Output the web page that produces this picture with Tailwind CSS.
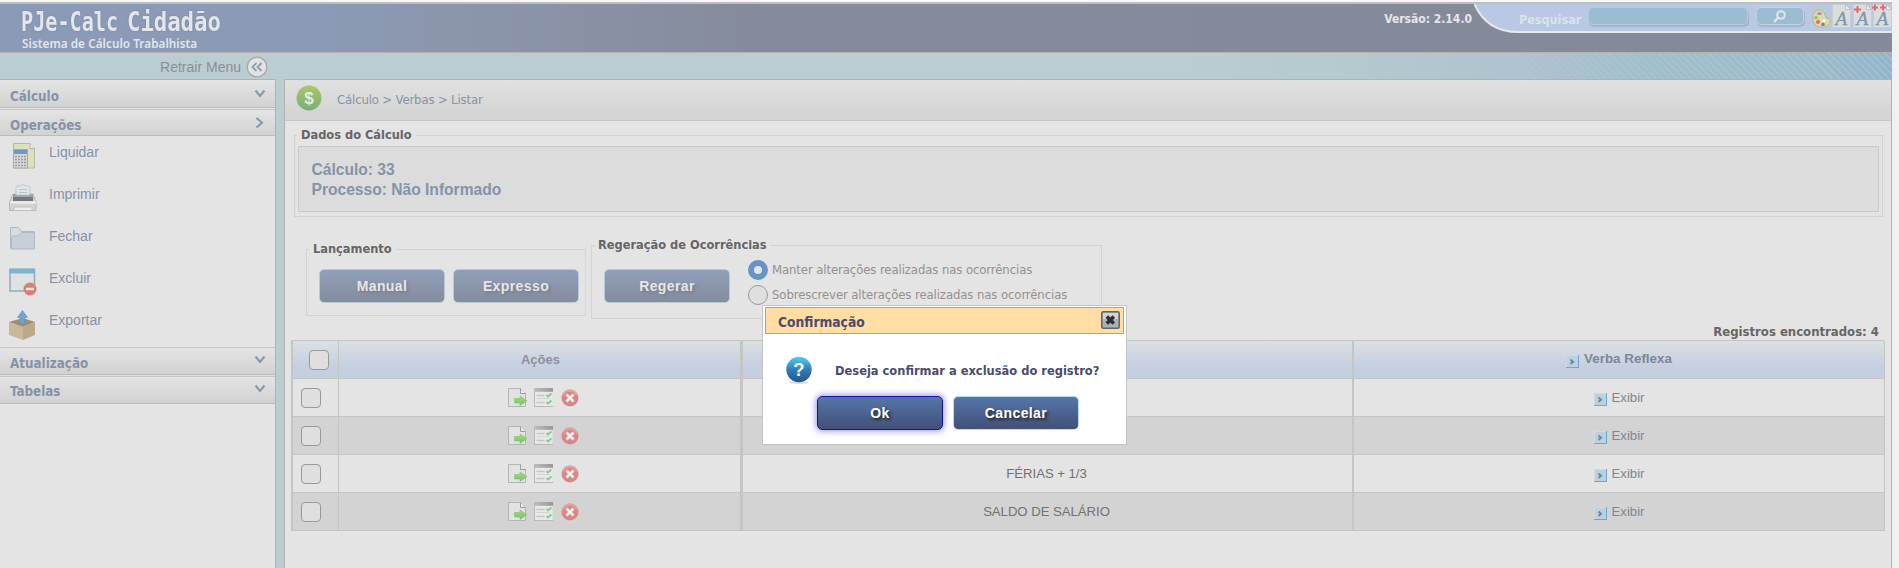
<!DOCTYPE html>
<html lang="pt-BR">
<head>
<meta charset="utf-8">
<title>PJe-Calc Cidadão</title>
<script src="https://cdn.jsdelivr.net/npm/@tailwindcss/browser@4"></script>
</head>
<body class="relative h-[568px] w-[1899px] overflow-hidden bg-[#f0f0f0] font-['Liberation_Sans',Arial,sans-serif]">

<svg class="absolute size-0">
  <defs>
    <linearGradient id="gGreen" x1="0" y1="0" x2="0" y2="1"><stop offset="0" stop-color="#a9ca69"/><stop offset="1" stop-color="#7bab78"/></linearGradient>
    <linearGradient id="gBlue" x1="0" y1="0" x2="0" y2="1"><stop offset="0" stop-color="#55cdf0"/><stop offset=".5" stop-color="#2f7fb8"/><stop offset="1" stop-color="#245689"/></linearGradient>
    <linearGradient id="gGray" x1="0" y1="0" x2="1" y2="0"><stop offset="0" stop-color="#bdbdbd"/><stop offset="1" stop-color="#989898"/></linearGradient>
    <linearGradient id="gArrow" x1="0" y1="0" x2="0" y2="1"><stop offset="0" stop-color="#b5d866"/><stop offset="1" stop-color="#6fc07c"/></linearGradient>
  </defs>
  <symbol id="down" viewBox="0 0 12 10"><path d="M1.500 1.500 6 7l4.500-5.500" fill="none" stroke="#8897ab" stroke-width="2"/></symbol>
  <symbol id="docgo" viewBox="0 0 19 19"><path d="M.5.5h12l5 5v13H.5z" fill="#e2e2e2" stroke="#b4b4b4"/><path d="M12.500.5v5h5" fill="#ececec" stroke="#9b9b9b"/><path d="M6.500 10.500h5.500v-2.500l7 4.700-7 4.800v-2.500H6.500z" fill="url(#gArrow)" stroke="#7cc275" stroke-width=".6"/></symbol>
  <symbol id="list" viewBox="0 0 19 19"><path d="M.5.5h18v18H.5z" fill="#e8e8e8"/><path d="M.5 0v19M0 18.500h19" stroke="#b8b8b8"/><path d="M0 0h19v3.800H0z" fill="url(#gGray)"/><path d="M2.500 7.500h8M2.500 14.500h8" stroke="#c6c6c6" stroke-width="1.500"/><path d="M2.500 10.500h13" stroke="#d4d4d4"/><path d="m12.500 7 1.500 1.500 3.500-3M12.500 14l1.500 1.500 3.500-3" fill="none" stroke="#86cd93" stroke-width="2"/></symbol>
  <symbol id="del" viewBox="0 0 18 18"><circle cx="9" cy="9" r="8.500" fill="#d98786"/><path d="M2 6.500a7.500 7.500 0 0 1 14 0" fill="none" stroke="#e3a2a0" stroke-width="2"/><path d="m5.500 5.500 7 7m0-7-7 7" stroke="#ececec" stroke-width="2.800"/></symbol>
  <symbol id="exp" viewBox="0 0 13 13"><path d="M0 0h13v13H0z" fill="#bcd0de"/><path d="M0 0h12v1H1v11H0z" fill="#cfdbe3"/><path d="M12 0h1v13H0v-1h12z" fill="#62abd3"/><path d="m4.500 4.500 2.500 2.200-2.500 2.300" fill="none" stroke="#688ba2" stroke-width="2"/></symbol>
  <symbol id="sheet" viewBox="0 0 19 24"><path d="M.5.500h13l5 5v18H.5z" fill="#dcdcdc" stroke="#c9cdd3"/><path d="M13.500.5v5h5z" fill="#eee" stroke="#c0c4ca"/></symbol>
</svg>

<div class="flex h-full w-[1892px] flex-col">
  <div class="h-[2px] shrink-0 bg-[#f8f8f8]"></div>
  <!-- Top banner -->
  <header class="flex h-[51px] shrink-0 justify-between border-y border-y-[#b7b2ae] border-t-[#bebebe] border-t-2 bg-[linear-gradient(90deg,#8b9bb7_0px,#8b9bb7_300px,#8b95aa_480px,#858b9c_760px,#858a9a_100%)]">
    <div class="pt-[2px] pl-[21px]">
      <div class="flex h-[31px] text-[26.5px] leading-[31px] font-bold text-[#e4e6ea] font-['DejaVu_Sans_Mono',monospace] [text-shadow:0_0_2px_#707f9b]">
        <span class="w-[106px] whitespace-nowrap"><span class="inline-block origin-left scale-x-[0.76]">PJe-Calc</span></span>
        <span class="w-[106px] whitespace-nowrap"><span class="inline-block origin-left scale-x-[0.84]">Cidadão</span></span>
      </div>
      <p class="pl-px text-[11.7px] leading-[12px] font-semibold text-[#e2e5ea] tracking-[0.07px] font-['Noto_Sans',sans-serif]">Sistema de Cálculo Trabalhista</p>
    </div>
    <div class="flex">
      <span class="mt-[7px] mr-[2px] text-[12px] leading-[16px] font-bold text-[#e6e6e6] font-['DejaVu_Sans_Condensed','DejaVu_Sans',sans-serif]">Versão: 2.14.0</span>
      <div class="relative flex h-[29px] w-[418px]">
        <svg class="absolute inset-0" width="418" height="29"><path d="M0-1C6 13 17 28 44 28H418V-1z" fill="#b9c9e3"/><path d="M0-1C6 13 17 28 44 28H418" fill="none" stroke="#e6e8ec" stroke-width="2"/></svg>
        <div class="relative flex w-full items-start">
          <span class="mt-[8px] ml-[45px] w-[69px] text-[12.5px] leading-[16px] font-bold text-[#dde2ea] font-['DejaVu_Sans_Condensed','DejaVu_Sans',sans-serif]">Pesquisar</span>
          <div class="mt-[3px] h-[18px] w-[160px] rounded-[5px] border border-[#b2cbdb] bg-[#9bbdd2] shadow-[1px_2px_1px_#a5b3cc]"></div>
          <div class="mt-[3px] ml-[8px] flex h-[18px] w-[48px] justify-center rounded-[5px] border border-[#c4d3e3] bg-[#9bbdd2] shadow-[1px_2px_1px_#a5b3cc]">
            <svg width="16" height="16"><circle cx="9" cy="7" r="3.800" fill="none" stroke="#dfe5ea" stroke-width="2"/><path d="M6.200 9.500 2 14" stroke="#dfe5ea" stroke-width="2.300"/></svg>
          </div>
          <svg class="mt-[5px] ml-[8px]" width="19" height="19"><path d="M7 .8C2 1-.5 7 1.300 12.500 3.500 18 8 18.500 11.500 18.200c3 0 6.500-3 6.800-6 0-2.500-2-3.500-4-3C13 6 12.500 1 7 .8z" fill="#ddd9a8" stroke="#b9b37c"/><ellipse cx="7.500" cy="4.500" rx="2.300" ry="1.600" fill="#b484c4"/><circle cx="4" cy="8.500" r="1.800" fill="#8ac27b"/><circle cx="6" cy="13" r="2" fill="#e06a6a"/><circle cx="11" cy="15.500" r="1.800" fill="#5f85c8"/><circle cx="12" cy="11.500" r="1.500" fill="#fff"/></svg>
          <svg class="ml-px" width="19" height="24"><use href="#sheet"/><text x="3.500" y="21" font-family="Liberation Serif" font-style="italic" font-size="19" stroke="#7a97b2" stroke-width=".3" fill="#7a97b2">A</text></svg>
          <svg class="ml-px" width="20" height="24"><use href="#sheet" width="19" height="24" x="1"/><text x="4.500" y="21" font-family="Liberation Serif" font-style="italic" font-size="19" stroke="#7a97b2" stroke-width=".3" fill="#7a97b2">A</text><path d="M2 5.500h7M5.500 2v7" stroke="#e46b6b" stroke-width="2"/></svg>
          <svg width="20" height="24"><use href="#sheet" width="19" height="24" x="1"/><text x="4.500" y="21" font-family="Liberation Serif" font-style="italic" font-size="19" stroke="#7a97b2" stroke-width=".3" fill="#7a97b2">A</text><path d="M0 3.500h6M3 .5v6M8 3.500h6M11 .5v6" stroke="#e46b6b" stroke-width="2"/></svg>
        </div>
      </div>
    </div>
  </header>

  <!-- Menu toggle strip -->
  <div class="relative h-[26px] shrink-0 bg-[linear-gradient(90deg,#bbcdd1_0px,#bbcdd1_1180px,#b4cace_1340px,#adc1cf_1540px,#a0bfca_1650px,#9dbccb_1800px,#93b5ca_1892px)]">
    <div class="absolute inset-y-0 right-0 w-[560px] bg-[repeating-linear-gradient(45deg,transparent_0px,transparent_3.500px,rgba(220,235,240,0.2)_3.500px,rgba(220,235,240,0.2)_5px)] [mask-image:linear-gradient(90deg,transparent,#000)]"></div>
    <div class="flex h-full w-[268px] items-center justify-end gap-[5px] pt-px">
      <span class="text-[14px] leading-none text-[#8d8f91]">Retrair Menu</span>
      <svg width="22" height="22" viewBox="0 0 22 22"><circle cx="11" cy="11" r="9.800" fill="#e3e3e3" stroke="#a3a8ab" stroke-width="1.300"/><path d="m10.500 7-4 4 4 4m5-8-4 4 4 4" fill="none" stroke="#8d9db0" stroke-width="1.800"/></svg>
    </div>
  </div>

  <div class="flex min-h-0 flex-1 gap-[8px] bg-[#bbcdd1]">
    <!-- Side menu -->
    <nav class="flex w-[276px] shrink-0 flex-col border-t border-r border-[#b2b2b2] bg-[#e4e4e4] text-[13.3px] font-bold text-[#8593a8] font-['DejaVu_Sans_Condensed','DejaVu_Sans',sans-serif]">
      <div class="flex h-[28px] items-center justify-between border-b border-[#bcbcbc] bg-linear-to-b from-[#e4e4e4] to-[#d2d2d2] pt-[6px] pr-[9px] pl-[10px]"><span>Cálculo</span><svg class="mb-[6px]" width="12" height="10"><use href="#down"/></svg></div>
      <div class="mt-px flex h-[27px] items-center justify-between border-y border-[#bcbcbc] border-t-[#c6c6c6] bg-linear-to-b from-[#e4e4e4] to-[#d2d2d2] pt-[6px] pr-[11px] pl-[10px]"><span>Operações</span><svg class="mb-[6px]" width="9" height="12"><path d="M1.500 1 7 5.800 1.500 10.500" fill="none" stroke="#8897ab" stroke-width="2"/></svg></div>
      <ul class="h-[211px] pt-[4px] pl-[9px] text-[14px] font-normal font-['Liberation_Sans',Arial,sans-serif]">
        <li class="flex h-[42px] gap-[12px]"><svg class="mt-[2px]" width="28" height="30"><path d="M4.500 1.500H21l4.500 5v19.500h-21z" fill="#dedfbc" stroke="#b8b8a6"/><path d="M21 1.500v5h4.500" fill="#eee" stroke="#b0b0b0"/><path d="M4.500 7.500h14v18.500h-14z" fill="#d8d8d8" stroke="#a8a8a8"/><path d="M5 8h13v4H5z" fill="#6d97c4"/><path d="M6 14.500h11M6 17.500h11M6 20.500h11M6 23.500h11" stroke="#9d9d9d" stroke-width="1.500" stroke-dasharray="2 1"/></svg><span class="pt-[2px] leading-[21px]">Liquidar</span></li>
        <li class="flex h-[42px] gap-[12px]"><svg class="mt-[2px]" width="28" height="30"><path d="M4 10h20l3 8v8.500H0.500V18z" fill="#d4d4d4" stroke="#adadad" stroke-width=".8"/><path d="M4 10h20v7H4z" fill="#777"/><path d="M4 10h20v3H4z" fill="#a2a2a2"/><path d="M7 2.500 14 .8l7 1.700v8.500H7z" fill="#dfe5e8" stroke="#b9c2c6" stroke-width=".8"/><path d="M10 5.500h8M10 8.500h8" stroke="#bcc4c8"/><path d="M1 18.500h26" stroke="#f0f0f0" stroke-width="2"/><path d="M5 23h18v3.500H5z" fill="#eee" stroke="#c0c0c0"/></svg><span class="pt-[2px] leading-[21px]">Imprimir</span></li>
        <li class="flex h-[42px] gap-[12px]"><svg class="mt-[2px]" width="28" height="30"><path d="M1.500 22.500v-21h8l3 4h12.500v17z" fill="#d9dcdf" stroke="#b3b8bf"/><path d="M2.500 23V12q0-2 2-2h5l3-3.500h13V23z" fill="#c8cfd9" stroke="#b0b8c4"/></svg><span class="pt-[2px] leading-[21px]">Fechar</span></li>
        <li class="flex h-[42px] gap-[12px]"><svg class="mt-[2px]" width="28" height="30"><path d="M1 1.500h24.500V23H1z" fill="#dfe2e3" stroke="#8fadbb" stroke-width="1.500"/><path d="M.5.5h25.500v5H.5z" fill="#7eb2cf"/><circle cx="21" cy="21" r="6.500" fill="#d97f76"/><path d="M17 21h8" stroke="#f0e6e4" stroke-width="2.500"/></svg><span class="pt-[2px] leading-[21px]">Excluir</span></li>
        <li class="flex h-[42px] gap-[12px]"><svg class="mt-[2px]" width="28" height="32"><path d="M0 12 14 8l12 4-12 5z" fill="#a08d70"/><path d="M0 12l14 5v13L0 25z" fill="#c9b79a"/><path d="M26 12l-12 5v13l12-5z" fill="#bda98a"/><path d="M13.500.5 18.500 7.500h-3V14h-4.500V7.500H8.500z" fill="#76a1d3" stroke="#5f8cc2" stroke-width=".6"/></svg><span class="pt-[2px] leading-[21px]">Exportar</span></li>
      </ul>
      <div class="flex h-[28px] items-center justify-between border-y border-[#bcbcbc] border-t-[#c6c6c6] bg-linear-to-b from-[#e4e4e4] to-[#d2d2d2] pt-[6px] pr-[9px] pl-[10px]"><span>Atualização</span><svg class="mb-[8px]" width="12" height="10"><use href="#down"/></svg></div>
      <div class="mt-[1px] flex h-[28px] items-center justify-between border-y border-[#bcbcbc] border-t-[#c6c6c6] bg-linear-to-b from-[#e4e4e4] to-[#d2d2d2] pt-[4px] pr-[9px] pl-[10px]"><span>Tabelas</span><svg class="mb-[7px]" width="12" height="10"><use href="#down"/></svg></div>
    </nav>

    <!-- Content -->
    <main class="flex min-w-0 flex-1 flex-col border border-b-0 border-[#b2b2b2] bg-[#e4e4e4]">
      <div class="flex h-[41px] shrink-0 items-center border-b border-[#c6c6c6] bg-[linear-gradient(180deg,#e1e1e1,#d5d5d5_80%)] pl-[11px] text-[#8593a8] font-['DejaVu_Sans_Condensed','DejaVu_Sans',sans-serif]">
        <svg class="-mt-[4px]" width="26" height="26"><circle cx="13" cy="13" r="12.500" fill="url(#gGreen)"/><text x="13" y="19" text-anchor="middle" font-family="Liberation Sans" font-weight="700" font-size="17" fill="#e6eadf">$</text></svg>
        <span class="-mt-[1px] ml-[15px] text-[13px] tracking-[-0.15px] whitespace-pre">Cálculo &gt; Verbas &gt; Listar</span>
      </div>

      <fieldset class="mt-[5px] mr-[8px] ml-[9px] h-[91px] border border-[#d3d3d3] px-[3px] text-[#666]">
        <legend class="ml-[-1px] px-[4px] text-[12.7px] leading-[18px] font-bold font-['DejaVu_Sans_Condensed','DejaVu_Sans',sans-serif]">Dados do Cálculo</legend>
        <div class="mt-[2px] flex h-[66px] flex-col justify-center border border-[#c9c9c9] bg-[#dcdcdc] pt-[1px] pl-[12.5px] text-[15.6px] leading-[20px] font-bold text-[#8593a8]">
          <p>Cálculo: 33</p>
          <p>Processo: Não Informado</p>
        </div>
      </fieldset>

      <div class="mt-[19px] flex h-[85px] shrink-0 items-start pl-[21px]">
        <fieldset class="mt-[4px] h-[76px] w-[280px] border border-[#d3d3d3] pl-[12px] text-[#666]">
          <legend class="ml-[-10px] px-[4px] text-[12.7px] leading-[18px] font-bold font-['DejaVu_Sans_Condensed','DejaVu_Sans',sans-serif]">Lançamento</legend>
          <div class="mt-[11px] flex gap-[8px]">
            <button class="h-[34px] w-[126px] rounded-[5px] border border-[#b6cbd5] bg-linear-to-b from-[#90a0bb] to-[#858c9d] text-[14px] font-bold tracking-[0.4px] text-[#e6e6e6] [text-shadow:2px_2px_3px_#777c8a]">Manual</button>
            <button class="h-[34px] w-[126px] rounded-[5px] border border-[#b6cbd5] bg-linear-to-b from-[#90a0bb] to-[#858c9d] text-[14px] font-bold tracking-[0.4px] text-[#e6e6e6] [text-shadow:2px_2px_3px_#777c8a]">Expresso</button>
          </div>
        </fieldset>
        <fieldset class="ml-[5px] h-[83px] w-[511px] border border-[#d3d3d3] pl-[12px] text-[#666]">
          <legend class="ml-[-9px] px-[3px] text-[12.7px] leading-[18px] font-bold font-['DejaVu_Sans_Condensed','DejaVu_Sans',sans-serif]">Regeração de Ocorrências</legend>
          <div class="mt-[3px] flex">
            <button class="mt-[12px] h-[34px] w-[126px] rounded-[5px] border border-[#b6cbd5] bg-linear-to-b from-[#90a0bb] to-[#858c9d] text-[14px] font-bold tracking-[0.4px] text-[#e6e6e6] [text-shadow:2px_2px_3px_#777c8a]">Regerar</button>
            <div class="ml-[18px] text-[13px] tracking-[-0.1px] text-[#97908f] font-['DejaVu_Sans_Condensed','DejaVu_Sans',sans-serif]">
              <div class="flex h-[25px] items-center gap-[4px]"><span class="size-[20px] rounded-full border-[6px] border-[#6795c3] bg-[#e4e4e4]"></span><span class="leading-[18px]">Manter alterações realizadas nas ocorrências</span></div>
              <div class="flex h-[25px] items-center gap-[4px]"><span class="size-[20px] rounded-full border border-[#999] bg-[#dfdfdf]"></span><span class="leading-[18px]">Sobrescrever alterações realizadas nas ocorrências</span></div>
            </div>
          </div>
        </fieldset>
      </div>

      <p class="mt-[2px] h-[17px] pr-[12px] text-right text-[13px] leading-[18px] font-bold text-[#666] font-['DejaVu_Sans_Condensed','DejaVu_Sans',sans-serif]">Registros encontrados: 4</p>

      <div class="mr-[7px] ml-[6px] grid grid-cols-[46px_402px_613px_531px] border-t border-l-2 border-[#c5c5c5] text-[13.2px] text-[#727272] [&>div]:flex [&>div]:items-center [&>div]:justify-center [&>div]:border-b [&>div]:border-[#c5c5c5]" id="grid">
        <div class="h-[38px] border-r bg-[linear-gradient(180deg,#dddfe3,#c3cee0_75%)] pl-[6px]"><span class="size-[20px] rounded-[4px] border border-[#999] bg-[#dfdfdf]"></span></div>
        <div class="h-[38px] border-r bg-[linear-gradient(180deg,#dddfe3,#c3cee0_75%)] pl-[2px] text-[13px] font-bold text-[#8d919c]">Ações</div>
        <div class="h-[38px] border-x-2 bg-[linear-gradient(180deg,#dddfe3,#c3cee0_75%)]"></div>
        <div class="h-[38px] gap-[5px] border-r bg-[linear-gradient(180deg,#dddfe3,#c3cee0_75%)] text-[13.4px] font-bold text-[#7d8797]"><svg class="mt-[3px]" width="13" height="13"><use href="#exp"/></svg>Verba Reflexa</div>
      </div>
    </main>
  </div>
</div>

<template id="row">
  <div class="h-[38px] border-r pr-[9px]"><span class="size-[20px] rounded-[4px] border border-[#999] bg-[#dfdfdf]"></span></div>
  <div class="h-[38px] gap-[7px] border-r pl-[8px]"><svg width="19" height="19"><use href="#docgo"/></svg><svg width="19" height="19"><use href="#list"/></svg><svg class="ml-px" width="18" height="18"><use href="#del"/></svg></div>
  <div class="h-[38px] border-x-2 pr-[2px] tracking-[-0.05px]"></div>
  <div class="h-[38px] gap-[5px] border-r text-[#7d8797]"><svg class="mt-[3px]" width="13" height="13"><use href="#exp"/></svg>Exibir</div>
</template>

<!-- Confirmation dialog -->
<div class="absolute top-[305px] left-[762px] flex h-[140px] w-[365px] flex-col border border-[#c4c4c4] bg-white p-[2px] pt-[1px] font-['DejaVu_Sans_Condensed','DejaVu_Sans',sans-serif]">
  <div class="flex h-[27px] shrink-0 items-center justify-between border border-[#d9a32a] bg-[#ffdda3] pr-[3px] pl-[12px]">
    <span class="pt-[4px] text-[13.7px] font-bold text-[#4a4c6e]">Confirmação</span>
    <svg class="-mt-[2px]" width="19" height="18"><rect x=".75" y=".75" width="17.500" height="16.500" rx="1.500" fill="#a9b2b6" stroke="#5d666b" stroke-width="1.500"/><path d="M2 2h15v6H2z" fill="#cfd4d6"/><path d="m5.800 5.500 7 7m0-7-7 7" stroke="#2e2e2e" stroke-width="3.600"/></svg>
  </div>
  <div class="flex items-center pt-[22px] pl-[20px]">
    <svg width="28" height="28"><ellipse cx="14" cy="26.500" rx="10" ry="1.500" fill="#d5dde3"/><circle cx="14" cy="13.500" r="12.700" fill="url(#gBlue)"/><text x="14" y="20" text-anchor="middle" font-family="Liberation Sans" font-weight="700" font-size="18.500" fill="#fff">?</text></svg>
    <span class="mt-[2px] ml-[22px] text-[12.75px] font-bold text-[#4a4c6e]">Deseja confirmar a exclusão do registro?</span>
  </div>
  <div class="mt-[12px] flex gap-[10px] pl-[52px] font-['Liberation_Sans',Arial,sans-serif]">
    <button class="h-[34px] w-[126px] rounded-[5px] border border-[#1414a0] bg-linear-to-b from-[#5476aa] to-[#435078] text-[14px] font-bold tracking-[0.4px] text-white shadow-[0_0_6px_1px_rgba(40,40,220,0.5)] [text-shadow:2px_2px_3px_#222]">Ok</button>
    <button class="h-[34px] w-[126px] rounded-[5px] border border-[#b4dcea] bg-linear-to-b from-[#5476aa] to-[#435078] text-[14px] font-bold tracking-[0.4px] text-white [text-shadow:2px_2px_3px_#222]">Cancelar</button>
  </div>
</div>

<script>
const grid = document.getElementById('grid');
['', '', 'FÉRIAS + 1/3', 'SALDO DE SALÁRIO'].forEach((name, i) => {
  const row = document.getElementById('row').content.cloneNode(true);
  const cells = [...row.children];
  cells[2].textContent = name;
  if (i % 2) cells.forEach(c => c.classList.add('bg-[#d3d3d3]'));
  grid.append(row);
});
</script>
</body>
</html>
